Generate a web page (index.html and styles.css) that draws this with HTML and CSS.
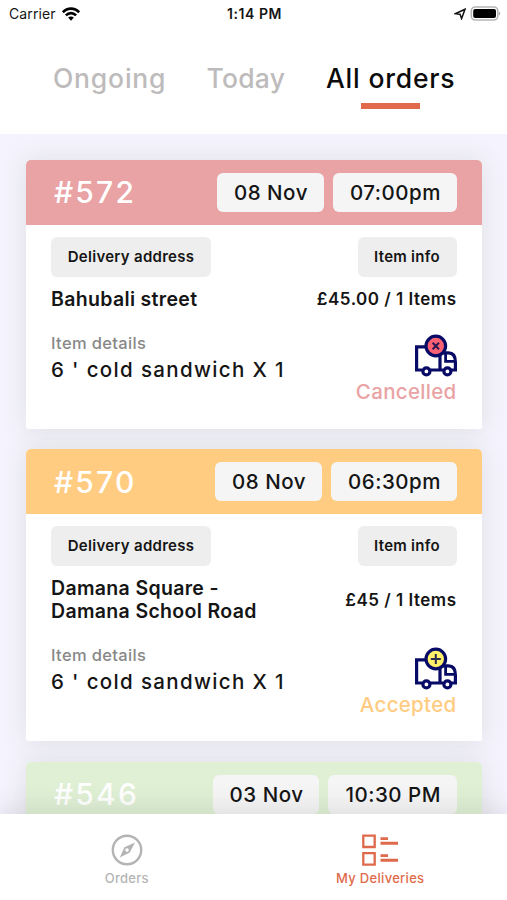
FILE: index.html
```html
<!DOCTYPE html>
<html lang="en">
<head>
<meta charset="utf-8">
<title>All orders</title>
<link rel="stylesheet" href="styles.css">
</head>
<body>
<svg class="defs" aria-hidden="true">
  <symbol id="truck" viewBox="0 0 44 44">
    <g fill="none" stroke="#080b66" stroke-width="3.2">
      <path d="M8 36H2.6V12.8H26V36H15M26 18.8H34.5C39 18.8 41.4 22 41.4 28V36H37M29 36H26"/>
      <path d="M31.6 19V27.4H41" stroke-width="2.8"/>
      <circle cx="12.4" cy="37.4" r="3.5"/>
      <circle cx="33.4" cy="37.4" r="3.5"/>
      <circle class="badge" cx="21.8" cy="12" r="9.8"/>
    </g>
  </symbol>
</svg>
<div class="screen">
  <header class="top">
    <div class="status">
      <div class="carrier"><span>Carrier</span>
        <svg width="18" height="14" viewBox="0 0 18 14" fill="none" stroke="#000" stroke-width="2.6"><path d="M.9 5.3C5.4.4 12.6.4 17.1 5.3M3.9 8.4C6.8 5.3 11.2 5.3 14.1 8.4"/><path d="M6.1 10.6C7.8 9 10.2 9 11.9 10.6L9 13.7Z" fill="#000" stroke="none"/></svg>
      </div>
      <div class="clock">1:14 PM</div>
      <div class="power">
        <svg width="12" height="12" viewBox="0 0 12 12" fill="none" stroke="#111" stroke-width="1.5"><path d="M1.2 5.7L11 1.2L7.6 10.5L6 6.2Z"/></svg>
        <svg width="31" height="16" viewBox="0 0 31 16"><rect x="1.3" y="1" width="26.5" height="13" rx="4" fill="#fff" stroke="#b5b5b5" stroke-width="1.6"/><rect x="3.2" y="2.9" width="22.8" height="9.2" rx="2" fill="#000"/><path d="M28.8 5.5Q31.8 7.5 28.8 9.5Z" fill="#aaa"/></svg>
      </div>
    </div>
    <nav class="tabs">
      <a class="tab ongoing">Ongoing</a><a class="tab today">Today</a><a class="tab active">All orders</a>
    </nav>
  </header>

  <main class="orders">
    <article class="card cancelled">
      <div class="head"><h2>#572</h2><span class="pill date">08 Nov</span><span class="pill time">07:00pm</span></div>
      <div class="body">
        <div class="row"><span class="label wide">Delivery address</span><span class="label">Item info</span></div>
        <div class="row summary"><p class="address">Bahubali street</p><p class="price">£45.00 / 1 Items</p></div>
        <div class="row details">
          <div><p class="caption">Item details</p><p class="item">6 ' cold sandwich X 1</p></div>
          <div class="state">
            <svg class="truck" viewBox="0 0 44 44"><use href="#truck"/><path d="M18.6 8.8L25 15.2M25 8.8L18.6 15.2" stroke="#2a1650" stroke-width="2"/></svg>
            <p>Cancelled</p>
          </div>
        </div>
      </div>
    </article>

    <article class="card accepted">
      <div class="head"><h2>#570</h2><span class="pill date">08 Nov</span><span class="pill time">06:30pm</span></div>
      <div class="body">
        <div class="row"><span class="label wide">Delivery address</span><span class="label">Item info</span></div>
        <div class="row summary"><p class="address">Damana Square -<br>Damana School Road</p><p class="price">£45 / 1 Items</p></div>
        <div class="row details">
          <div><p class="caption">Item details</p><p class="item">6 ' cold sandwich X 1</p></div>
          <div class="state">
            <svg class="truck" viewBox="0 0 44 44"><use href="#truck"/><path d="M16.8 12H26.8M21.8 7V17" stroke="#2c2a50" stroke-width="2"/></svg>
            <p>Accepted</p>
          </div>
        </div>
      </div>
    </article>

    <article class="card done">
      <div class="head"><h2>#546</h2><span class="pill date">03 Nov</span><span class="pill time">10:30 PM</span></div>
    </article>
  </main>

  <footer class="bottom">
    <a class="nav">
      <svg width="32" height="32" viewBox="0 0 32 32"><circle cx="16" cy="16" r="14.2" fill="none" stroke="#b4b4b4" stroke-width="2.4"/><path fill-rule="evenodd" fill="#b4b4b4" d="M24 8.4L18.8 18.6L8.8 23.6L13.4 13.2ZM16 14.3A1.8 1.8 0 1 0 16 17.9A1.8 1.8 0 1 0 16 14.3Z"/></svg>
      <span>Orders</span>
    </a>
    <a class="nav current">
      <svg width="36" height="32" viewBox="0 0 36 32" fill="none" stroke="#df6a4b"><path stroke-width="2.3" d="M1.3 1.7H12.7V13H1.3ZM1.3 19.2H12.7V30.6H1.3Z"/><path stroke-width="2.9" d="M18.5 4.6H26M18.5 9.2H36M18.5 21.6H26M18.5 26.2H36"/></svg>
      <span>My Deliveries</span>
    </a>
  </footer>
</div>
</body>
</html>
```
FILE: styles.css
```css
* { box-sizing: border-box; margin: 0; }
body { font-family: Inter, "Liberation Sans", sans-serif; color: #151515; background: #f5f4fe; }
.defs { display: none; }
.screen { height: 900px; display: flex; flex-direction: column; overflow: hidden; }

.top { height: 133.5px; flex: none; background: #fff; }
.status { height: 27px; display: grid; grid-template-columns: 1fr auto 1fr; align-items: center; padding: 0 6px 0 9px; font-size: 14px; }
.carrier { display: flex; align-items: center; gap: 6px; letter-spacing: .1px; }
.clock { font-weight: 600; font-size: 14px; letter-spacing: .55px; margin-right: 1px; }
.power { display: flex; align-items: center; justify-content: flex-end; gap: 4px; }
.tabs { display: flex; align-items: flex-start; padding: 34px 0 0 53px; font-size: 26.5px; line-height: 34px; letter-spacing: .8px; font-weight: 500; }
.tab { color: #bdbbbb; }
.ongoing { width: 153.5px; }
.today { width: 119.5px; letter-spacing: .25px; }
.active { color: #0b0b0b; display: flex; flex-direction: column; align-items: center; }
.active::after { content: ""; width: 59px; height: 6px; margin-top: 7.5px; background: #e06a4b; }

.orders { flex: 1; min-height: 0; overflow: hidden; padding: 26px 25.5px 0 26px; display: flex; flex-direction: column; gap: 20.5px; }
.card { flex: none; background: #fff; border-radius: 5px 5px 2px 2px; box-shadow: 0 0 26px 2px rgba(60, 70, 10, .1); }
.head { height: 65px; display: flex; align-items: center; gap: 9px; padding: 0 24.5px 0 28px; border-radius: 5px 5px 0 0; }
.cancelled .head { background: #e9a3a4; }
.accepted .head { background: #ffcc82; }
.done .head { background: #dff0d5; }
.done { height: 270px; }
h2 { flex: 1; color: #fff; font-size: 30px; font-weight: 500; letter-spacing: 2.2px; }
.pill { height: 39px; line-height: 39px; padding: 0 16px 0 17px; border-radius: 6px; background: #f5f5f5; font-size: 20.5px; font-weight: 500; letter-spacing: .52px; white-space: nowrap; }
.body { padding: 12px 25px 23px 25px; }
.row { display: flex; justify-content: space-between; align-items: center; }
.label { width: 99px; height: 40px; line-height: 40px; text-align: center; border-radius: 6px; background: #eee; font-size: 15px; font-weight: 600; letter-spacing: .28px; }
.label.wide { width: 160px; }
.summary { margin-top: 11px; }
.address { font-size: 19.5px; line-height: 23px; font-weight: 600; letter-spacing: .33px; }
.price { font-size: 17px; font-weight: 600; letter-spacing: .5px; }
.details { margin-top: 21px; align-items: flex-start; }
.caption { color: #888; font-size: 16.5px; line-height: 22px; letter-spacing: .35px; font-weight: 500; }
.item { font-size: 20.5px; line-height: 32px; letter-spacing: 1.35px; font-weight: 500; }
.state { display: flex; flex-direction: column; align-items: flex-end; font-size: 20.5px; line-height: 28px; letter-spacing: .3px; font-weight: 500; }
.truck { width: 44px; height: 44px; margin: 2.5px -1px 0 0; }
.state { margin-bottom: -.5px; }
.cancelled { --tone: #e9a3a4; --badge: #fa6273; }
.accepted { --tone: #ffcc82; --badge: #fff06a; }
.state p { color: var(--tone); }
.badge { fill: var(--badge); }

.bottom { position: relative; height: 86.5px; flex: none; display: grid; grid-template-columns: 1fr 1fr; background: #fff; box-shadow: 0 0 26px 4px rgba(60, 60, 60, .13); }
.nav { display: flex; flex-direction: column; align-items: center; padding-top: 20.5px; color: #b4b4b4; font-size: 13px; line-height: 16px; gap: 3.5px; letter-spacing: .3px; font-weight: 500; }
.current { color: #df6a4b; }
```
